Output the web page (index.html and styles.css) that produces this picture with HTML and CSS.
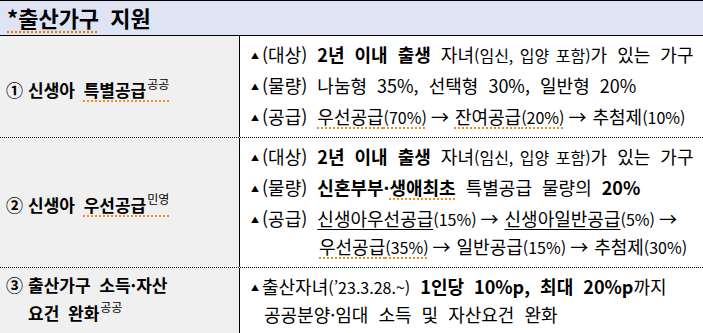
FILE: index.html
```html
<!DOCTYPE html>
<html lang="ko">
<head>
<meta charset="utf-8">
<link rel="stylesheet" href="styles.css">
</head>
<body>
<div class="tbl">
  <div class="head"><span class="sp">*출산가구</span> 지원</div>
  <div class="row r1">
    <div class="lbl"><div><span class="num">①</span>신생아 <span class="sp">특별공급<sup>공공</sup></span></div></div>
    <div class="cnt">
      <p><span class="tri">▲</span>(대상) <b>2년 이내 출생</b> 자녀<small>(임신, 입양 포함)</small>가 있는 가구</p>
      <p><span class="tri">▲</span>(물량) 나눔형 35%, 선택형 30%, 일반형 20%</p>
      <p><span class="tri">▲</span>(공급) <span class="sp">우선공급<small>(70%)</small></span><span class="ar">→</span><span class="sp">잔여공급<small>(20%)</small></span><span class="ar">→</span>추첨제<small>(10%)</small></p>
    </div>
  </div>
  <div class="row r2">
    <div class="lbl"><div><span class="num">②</span>신생아 <span class="sp">우선공급<sup>민영</sup></span></div></div>
    <div class="cnt">
      <p><span class="tri">▲</span>(대상) <b>2년 이내 출생</b> 자녀<small>(임신, 입양 포함)</small>가 있는 가구</p>
      <p><span class="tri">▲</span>(물량) <b>신혼부부·<span class="sp">생애최초</span></b> 특별공급 물량의 <b>20%</b></p>
      <p class="hang"><span class="tri">▲</span>(공급) <span class="ul">신생아우선공급</span><small>(15%)</small><span class="ar">→</span><span class="ul">신생아일반공급</span><small>(5%)</small><span class="ar">→</span><br><span class="sp">우선공급<small>(35%)</small></span><span class="ar">→</span>일반공급<small>(15%)</small><span class="ar">→</span>추첨제<small>(30%)</small></p>
    </div>
  </div>
  <div class="row last">
    <div class="lbl top"><div><span class="num">③</span>출산가구 소득·자산<br><span class="ind">요건 완화<sup>공공</sup></span></div></div>
    <div class="cnt">
      <p class="hang2"><span class="tri">▲</span>출산자녀<small>(’23.3.28.~)</small> <b>1인당 10%p, 최대 20%p</b>까지<br>공공분양·임대 소득 및 자산요건 완화</p>
    </div>
  </div>
</div>
</body>
</html>
```
FILE: styles.css
```css
html, body { margin: 0; padding: 0; background: #fff; }
body {
  width: 703px;
  height: 333px;
  overflow: hidden;
  font-family: "Noto Sans CJK KR", "Noto Sans", sans-serif;
  color: #000;
}
.tbl {
  border-top: 1px solid #000;
}
.head {
  background: #dee4f4;
  height: 34px;
  border-bottom: 1px solid #000;
  font-size: 22px;
  font-weight: bold;
  line-height: 32px;
  padding-left: 7px;
  word-spacing: 5px;
}
.row {
  display: grid;
  grid-template-columns: 240px 1fr;
  border-bottom: 1px dotted #000;
}
.row.last { border-bottom: none; height: 70px; }
.lbl {
  background: #f0f0f0;
  border-right: 1px solid #000;
  display: flex;
  align-items: center;
  padding-left: 6px;
  font-size: 17px;
  font-weight: bold;
  word-spacing: 4px;
  line-height: 28px;
  white-space: nowrap;
}
.r1 .lbl { padding-top: 6px; }
.r2 .lbl { padding-top: 4px; }
.num { display: inline-block; width: 22px; font-weight: bold; }
.lbl.top { align-items: flex-start; padding-top: 3px; }
.ind { padding-left: 22px; }
.cnt {
  padding: 4px 0 7px 11px;
  font-size: 18px;
  line-height: 28px;
  word-spacing: 5px;
  white-space: nowrap;
}
.cnt p { margin: 0 0 3px; height: 28px; }
.cnt p.hang, .cnt p.hang2 { height: 56px; }
.cnt p:last-child { margin-bottom: 0; }
.hang { padding-left: 68px; text-indent: -68px; }
.hang2 { padding-left: 13px; text-indent: -13px; }
.tri {
  font-size: 8px;
  line-height: 1;
  display: inline-block;
  width: 11px;
  vertical-align: 3px;
  text-indent: 0;
}
.ar { margin: 0 6px 0 4px; word-spacing: 0; }
small { font-size: 16px; line-height: 1; word-spacing: 2px; }
sup { font-size: 12px; font-weight: normal; vertical-align: 8px; line-height: 0; margin-left: 1px; word-spacing: 0; }
b { font-weight: bold; }
.sp {
  text-decoration: underline dotted #f08000;
  text-underline-offset: 4px;
}
.ul {
  text-decoration: underline solid #000;
  text-underline-offset: 3px;
}
```
